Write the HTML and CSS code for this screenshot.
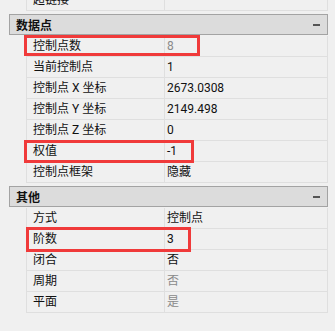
FILE: index.html
```html
<!DOCTYPE html>
<html lang="zh">
<head>
	<meta charset="UTF-8">
	<title>属性</title>
	<link rel="stylesheet" href="styles.css">
</head>
<body>
	<div class="grid">
		<div class="rows rows-top">
			<div class="row"><span class="name">超链接</span><span class="val"></span></div>
		</div>

		<div class="group">
			<div class="group-head">数据点<span class="toggle"></span></div>
			<div class="rows">
				<div class="row"><span class="name">控制点数</span><span class="val dim">8</span></div>
				<div class="row"><span class="name">当前控制点</span><span class="val">1</span></div>
				<div class="row"><span class="name">控制点 X 坐标</span><span class="val">2673.0308</span></div>
				<div class="row"><span class="name">控制点 Y 坐标</span><span class="val">2149.498</span></div>
				<div class="row"><span class="name">控制点 Z 坐标</span><span class="val">0</span></div>
				<div class="row"><span class="name">权值</span><span class="val">-1</span></div>
				<div class="row"><span class="name">控制点框架</span><span class="val">隐藏</span></div>
			</div>
		</div>

		<div class="group group-other">
			<div class="group-head">其他<span class="toggle"></span></div>
			<div class="rows">
				<div class="row"><span class="name">方式</span><span class="val">控制点</span></div>
				<div class="row"><span class="name">阶数</span><span class="val">3</span></div>
				<div class="row"><span class="name">闭合</span><span class="val">否</span></div>
				<div class="row"><span class="name">周期</span><span class="val dim">否</span></div>
				<div class="row"><span class="name">平面</span><span class="val dim">是</span></div>
			</div>
		</div>
	</div>

	<!-- highlight boxes -->
	<div class="mark mark-count"></div>
	<div class="mark mark-weight"></div>
	<div class="mark mark-degree"></div>
</body>
</html>
```

FILE: styles.css
```css
*{margin:0;padding:0;box-sizing:border-box;}
html,body{background:#f0f0f0;}
body{font-family:Roboto,"Noto Sans CJK SC",sans-serif;font-size:12px;color:#111;position:relative;height:331px;overflow:hidden;}

.grid{width:319px;margin-left:9px;}

.rows{margin-left:17px;width:302px;padding-top:1px;}
.rows-top{margin-top:-10px;padding-top:0;}
.row{display:grid;grid-template-columns:139px 1fr;height:21px;border-bottom:1px solid #dfdfdf;}
.row .name{border-left:1px solid #dfdfdf;border-right:1px solid #dfdfdf;padding-left:6px;line-height:20px;white-space:nowrap;}
.row .val{border-right:1px solid #dfdfdf;padding-left:2px;line-height:20px;white-space:nowrap;}
.row .dim{color:#8a8a8a;}

.group{margin-top:3px;}
.group-other{margin-top:3px;}
.group-head{height:21px;border:1px solid #a3a3a3;background:#dcdcdc;display:flex;align-items:center;justify-content:space-between;padding:0 7px 0 6px;font-weight:bold;}
.toggle{width:7px;height:2px;background:#555;}

.mark{position:absolute;border:3px solid #f03a3a;pointer-events:none;}
.mark-count{left:24px;top:35px;width:176px;height:21px;}
.mark-weight{left:24px;top:140px;width:170px;height:23px;}
.mark-degree{left:26px;top:227px;width:165px;height:25px;}
```
